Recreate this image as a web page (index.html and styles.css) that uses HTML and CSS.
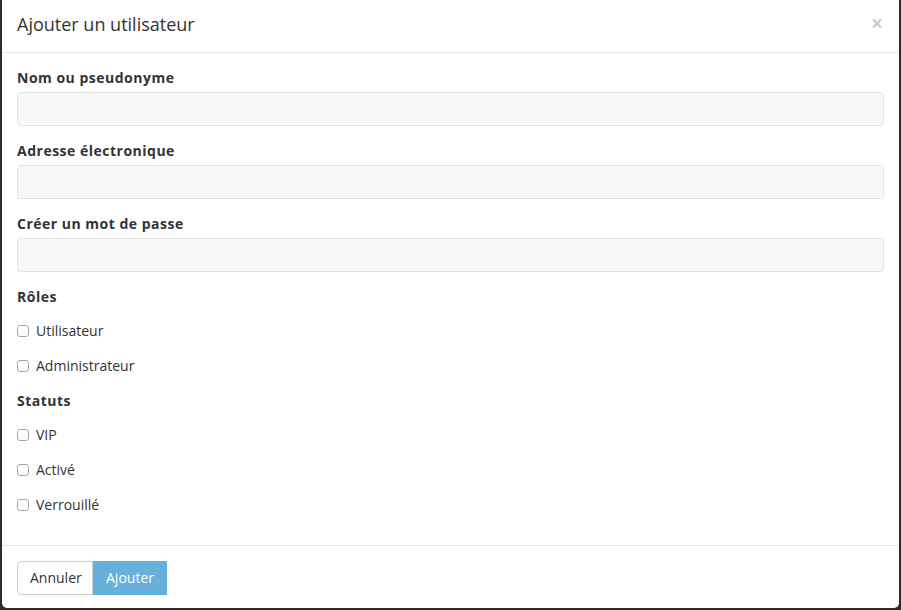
FILE: index.html
```html
<!DOCTYPE html>
<html lang="fr">
<head>
<meta charset="utf-8">
<title>Ajouter un utilisateur</title>
<link rel="stylesheet" href="styles.css">
</head>
<body>
<div class="modal">
  <div class="modal-header">
    <h4 class="modal-title">Ajouter un utilisateur</h4>
    <span class="close">&times;</span>
  </div>
  <div class="modal-body">
    <div class="form-group">
      <label class="control-label">Nom ou pseudonyme</label>
      <div class="form-control"></div>
    </div>
    <div class="form-group">
      <label class="control-label">Adresse électronique</label>
      <div class="form-control"></div>
    </div>
    <div class="form-group">
      <label class="control-label">Créer un mot de passe</label>
      <div class="form-control"></div>
    </div>
    <div class="group-title">Rôles</div>
    <label class="check"><span class="box"></span>Utilisateur</label>
    <label class="check"><span class="box"></span>Administrateur</label>
    <div class="group-title">Statuts</div>
    <label class="check"><span class="box"></span>VIP</label>
    <label class="check"><span class="box"></span>Activé</label>
    <label class="check last"><span class="box"></span>Verrouillé</label>
  </div>
  <div class="modal-footer">
    <div class="btn-group">
      <button class="btn btn-default">Annuler</button>
      <button class="btn btn-primary">Ajouter</button>
    </div>
  </div>
</div>
</body>
</html>
```
FILE: styles.css
```css
* { box-sizing: border-box; }
html, body { margin: 0; padding: 0; }
body {
  background: #2b2b2b;
  font-family: "Open Sans", "Noto Sans", sans-serif;
  font-size: 14px;
  color: #333;
  height: 610px;
  overflow: hidden;
}
.modal {
  margin-left: 2px;
  width: 897px;
  height: 608px;
  background: #fff;
  border-radius: 0 0 5px 5px;
  display: flex;
  flex-direction: column;
}
.modal-header {
  display: flex;
  justify-content: space-between;
  align-items: flex-start;
  padding: 13px 15px 16px 15px;
  border-bottom: 1px solid #e5e5e5;
}
.modal-title {
  margin: 0;
  font-size: 18px;
  font-weight: 400;
  line-height: 23px;
  color: #333;
}
.close {
  font-size: 21px;
  font-weight: 700;
  line-height: 1;
  color: #000;
  opacity: 0.2;
  margin-top: 0px;
  margin-right: 1px;
}
.modal-body {
  padding: 15px 15px 0 15px;
  flex: 1;
}
.form-group { margin-bottom: 15px; }
.control-label {
  display: block;
  font-weight: 700;
  line-height: 20px;
  letter-spacing: 0.5px;
  margin-bottom: 4px;
}
.form-control {
  height: 34px;
  background: #f8f8f8;
  border: 1px solid #e3e3e3;
  border-radius: 4px;
}
.group-title {
  font-weight: 700;
  line-height: 20px;
  letter-spacing: 0.5px;
  margin-bottom: 14px;
}
.check {
  display: flex;
  align-items: center;
  line-height: 20px;
  margin-bottom: 15px;
}
.check.last { margin-bottom: 0; }
.box {
  width: 12px;
  height: 12px;
  border: 1px solid #a6a6a6;
  border-radius: 3px;
  background: #fff;
  margin-right: 7px;
  flex: none;
}
.modal-footer {
  border-top: 1px solid #e5e5e5;
  padding: 15px 15px 13px 15px;
}
.btn-group { display: flex; }
.btn {
  font-family: inherit;
  font-size: 14px;
  line-height: 20px;
  height: 34px;
  padding: 6px 12px;
  margin: 0;
  border: 1px solid #ccc;
  background: #fff;
  color: #333;
}
.btn-default { border-radius: 4px 0 0 4px; width: 76px; }
.btn-primary {
  background: #66b0dc;
  border-color: #66b0dc;
  color: #fff;
  border-radius: 0;
  width: 74px;
}
```
